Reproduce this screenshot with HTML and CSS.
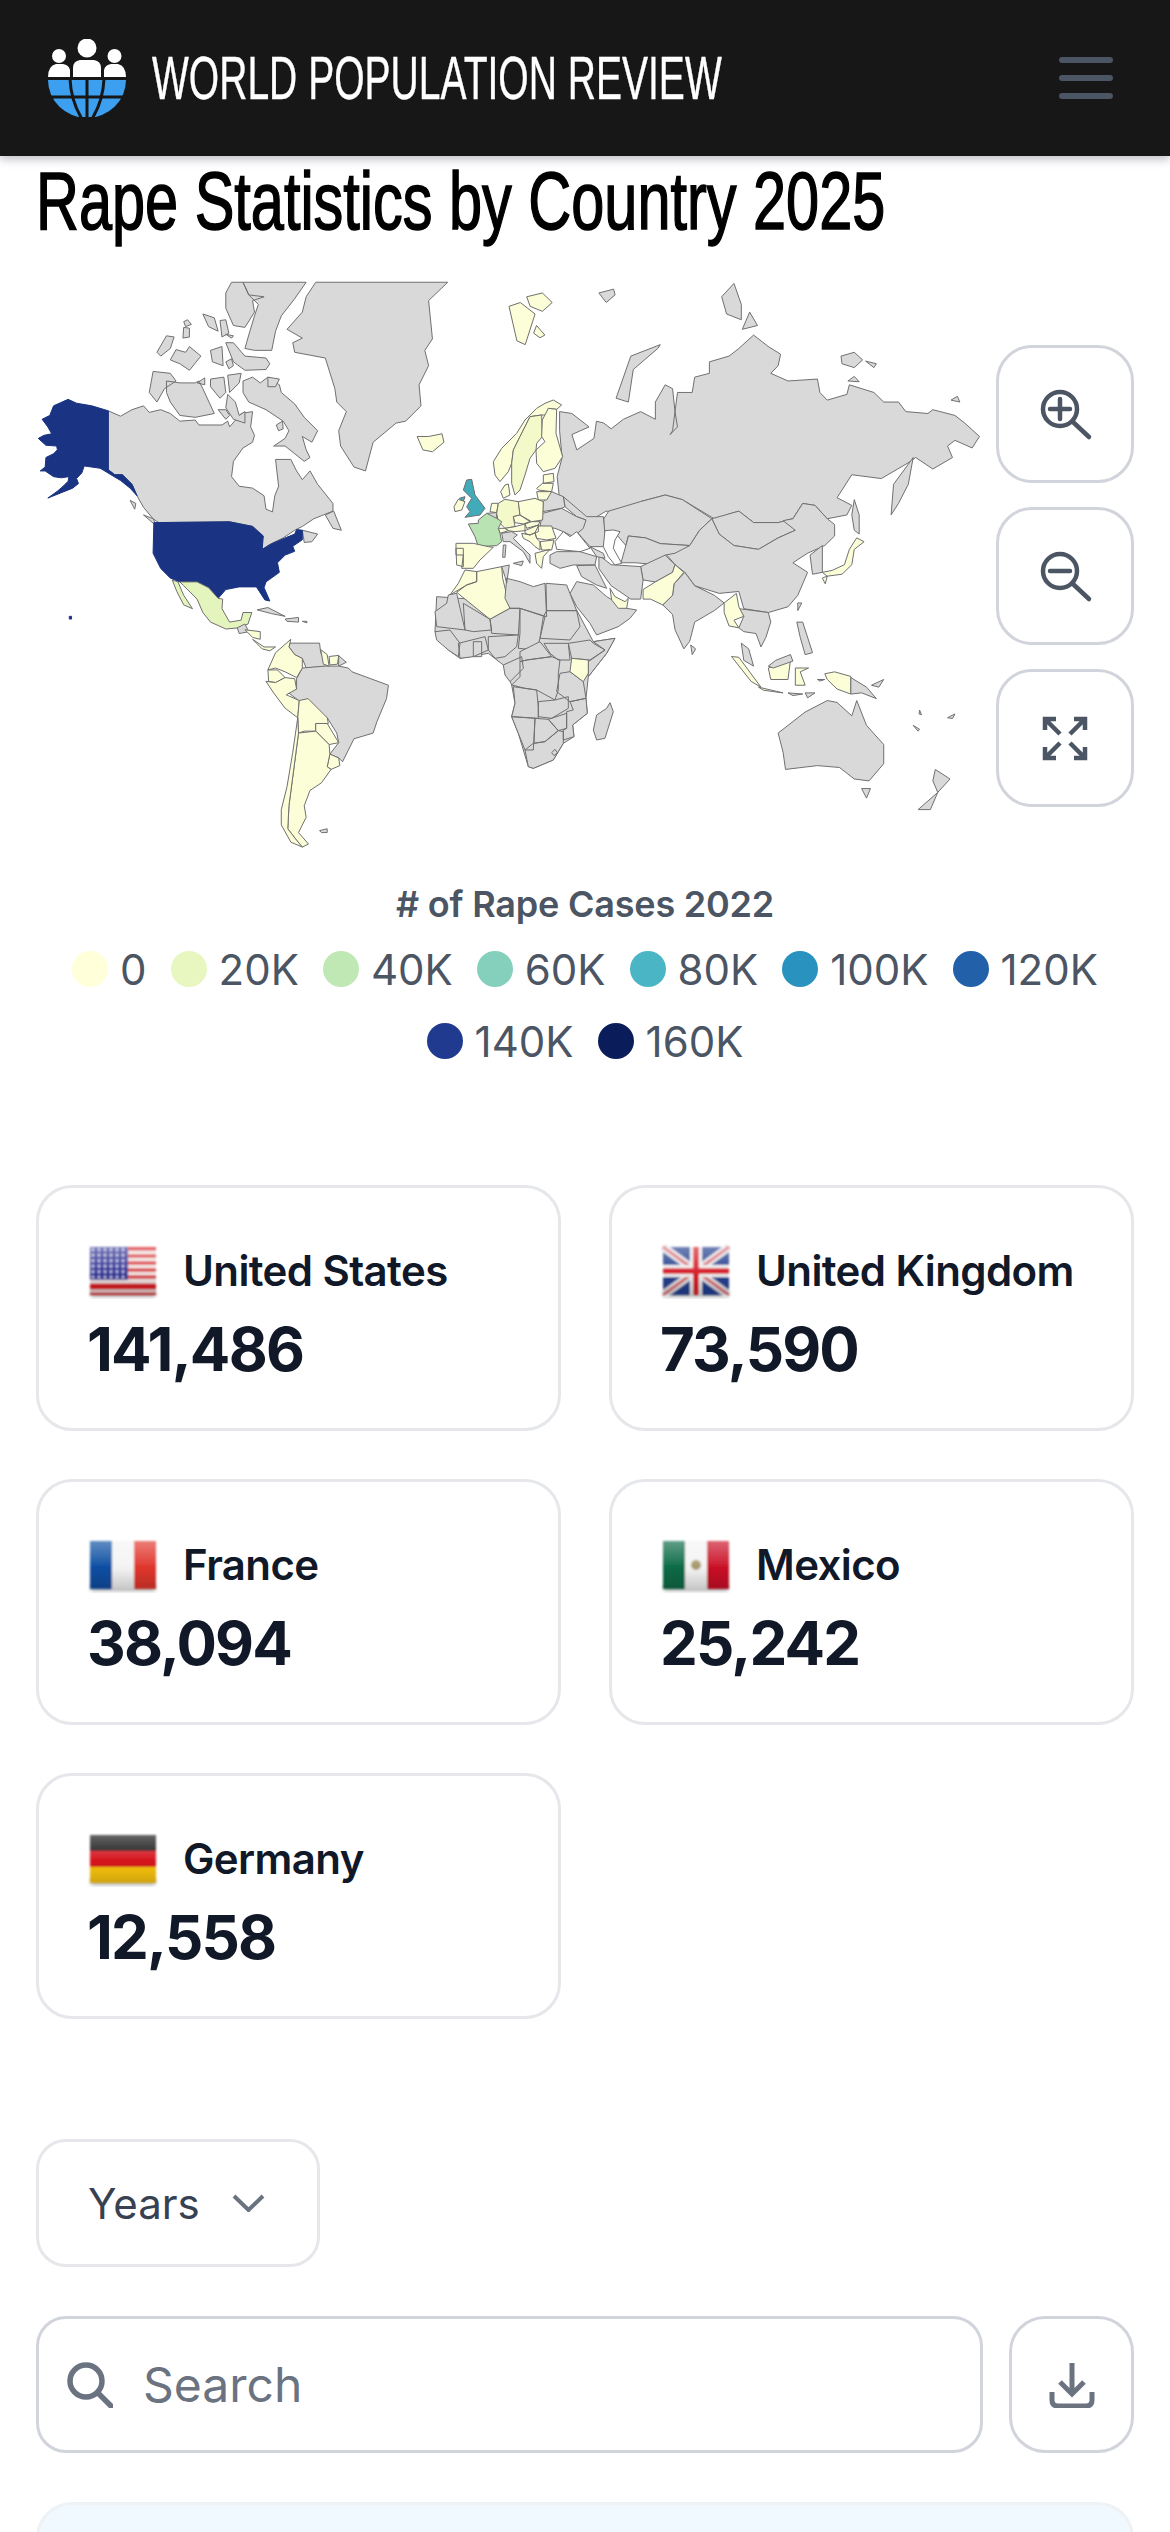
FILE: index.html
```html
<!DOCTYPE html>
<html lang="en">
<head>
<meta charset="utf-8">
<title>Rape Statistics by Country 2025</title>
<link rel="stylesheet" href="styles.css">
</head>
<body>
<header class="topbar">
  <div class="brand">
    <svg class="logo" viewBox="48 39 78 78" aria-hidden="true">
      <circle cx="87" cy="48" r="9.5" fill="#fff"/>
      <circle cx="59" cy="56" r="7" fill="#fff"/>
      <circle cx="114.500" cy="56" r="7" fill="#fff"/>
      <path d="M73 77v-9q0-7 7-8h14q7 1 7 8v9z" fill="#fff"/>
      <path d="M48 77q0-11 8-13h7q6 1 7 6v7z" fill="#fff"/>
      <path d="M126 77q0-11-8-13h-7q-6 1-7 6v7z" fill="#fff"/>
      <path d="M48 80h78a39 38 0 0 1-78 0z" fill="#3d9fef"/>
      <path d="M48 97h78M70 79q1 22 12 40M87 79v40M104 79q-1 22-12 40" stroke="#171717" stroke-width="3" fill="none"/>
    </svg>
    <span class="brand-name">WORLD POPULATION REVIEW</span>
  </div>
  <div class="burger"><span></span><span></span><span></span></div>
</header>

<main class="page">
  <h1 class="title"><span>Rape Statistics by Country 2025</span></h1>

  <section class="map-wrap">
    <svg class="map" viewBox="36 270 1098 600" aria-label="World map">
      <g transform="translate(0 270) scale(.3827)">
        <path class="g" d="M825 32H1170L1120 80 1130 180 1110 210 1120 250 1095 300 1100 355 1060 395 1035 400 975 450 955 525 925 515 890 460 885 420 905 370 880 345 875 310 850 230 770 215 765 190 790 178 750 155 790 110 800 70Z"/>
        <path class="g" d="M283 368L315 382 345 365 375 355 390 372 420 365 445 375 470 395 510 392 520 405 580 405 595 395 600 410 630 375 660 370 655 410 665 432 660 450 635 465 610 500 605 540 625 565 660 570 690 590 695 625 712 632 718 590 728 565 720 495 760 495 775 525 790 548 810 525 830 560 870 610 870 630 820 650 790 670 770 680 740 700 700 720 685 732 685 695 660 670 600 658 415 660 400 650 375 620 358 590 345 560 320 535 300 535 283 522Z"/>
        <path class="g" d="M635 290L660 280 680 295 700 280 730 300 735 320 770 350 795 385 830 420 815 450 790 435 800 470 810 490 795 500 770 480 745 460 715 460 745 440 755 420 740 395 695 365 650 345 635 320Z"/>
        <path class="g" d="M850 640L872 630 892 680 870 675ZM790 680L830 690 815 710 795 712ZM340 602L355 610 352 625ZM375 640L400 650 410 670ZM722 405L738 395 740 415 728 420Z"/>
        <path class="g" d="M400 265L445 270 460 290 430 310 410 345 390 320ZM435 290L470 295 510 295 520 290 530 310 560 375 510 385 470 380 445 345 435 320ZM410 215L435 172 455 175 445 205 420 225ZM445 235L460 208 485 215 495 200 525 225 495 262 470 245ZM480 150L495 152 495 175 478 178ZM480 135L490 130 500 142 485 148ZM530 115L560 125 570 160 545 148ZM575 132L590 130 598 165 580 175ZM590 168L610 172 605 178ZM550 210L580 200 583 250 555 240ZM590 190L610 190 640 225 695 230 705 245 695 260 640 262 610 240ZM590 240L605 232 610 250 598 258ZM550 285L585 280 590 320 575 335 550 305ZM595 275L630 270 625 295 600 320ZM595 325L615 345 625 380 640 370 640 400 610 390 590 360ZM515 295L535 282 535 300ZM570 365L590 365 600 380 590 390ZM700 280L730 285 720 305 700 305Z"/>
        <path class="g" d="M590 60L605 32 635 32 650 65 690 70 660 80 665 110 640 150 610 145 590 100ZM635 32H800L770 75 735 120 720 160 710 210 665 210 640 205 650 170 665 120 675 90 650 65Z"/>
        <path class="us" d="M283 368V522L262 518 240 515 220 512 214 530 200 545 205 558 190 570 165 580 125 596 150 578 165 565 178 552 180 540 160 543 140 540 118 525 105 525 118 515 120 490 140 480 150 470 148 460 120 458 100 440 115 432 135 428 125 410 110 390 130 380 140 355 178 338 200 348 240 355Z"/>
        <path class="us" d="M262 518L283 522 300 535 320 535 345 560 358 590 340 570 315 550 290 535Z"/>
        <path class="us" d="M402 660L600 658 660 670 688 695 685 730 710 715 745 700 770 690 775 678 790 680 790 705 765 722 770 735 745 745 725 765 730 790 695 815 690 830 705 865 692 862 670 828 625 828 590 835 570 858 545 830 515 815 470 815 445 805 420 780 400 740Z"/>
        <path class="us" d="M181 905h6v7h-6z"/>
        <path class="mx" d="M470 815L515 815 545 830 570 858 582 860 580 885 600 920 630 915 635 895 658 895 648 925 625 935 590 938 550 920 530 895 515 860 480 825Z"/>
        <path class="mx" d="M450 810L465 815 480 850 503 885 480 875 462 840Z"/>
        <path class="g" d="M620 935L640 925 650 945 625 950ZM672 888L700 882 745 905 710 898ZM745 912L780 908 780 920 750 918ZM790 918L802 918 802 922Z"/>
        <path class="l" d="M640 940L680 945 680 965 660 960ZM660 965L690 985 720 985 705 995 685 990Z"/>
        <path class="g" d="M758 975L835 975 838 1000 855 1035 800 1040 790 1015 770 1005 755 985ZM885 1008L905 1025 885 1035Z"/>
        <path class="g" d="M748 1100L775 1095 775 1068 790 1040 850 1035 885 1035 910 1040 920 1050 1015 1085 1010 1120 985 1180 975 1210 925 1225 895 1285 885 1275 862 1265 885 1235 880 1210 855 1170 805 1135 780 1125Z"/>
        <path class="l" d="M720 1000L760 965 755 985 770 1005 790 1015 790 1040 775 1065 745 1050 720 1040 700 1045Z"/>
        <path class="l" d="M838 992L855 1005 860 1035 845 1030ZM860 1010L885 1007 882 1030 862 1032Z"/>
        <path class="l" d="M700 1045L725 1045 745 1065 720 1078 702 1075Z"/>
        <path class="l" d="M695 1075L720 1078 745 1065 770 1068 775 1095 748 1110 782 1125 778 1170 745 1145 715 1105Z"/>
        <path class="l" d="M782 1125L805 1120 855 1170 858 1185 825 1185 825 1205 795 1205 780 1210 778 1170Z"/>
        <path class="l" d="M825 1185L855 1185 885 1235 860 1240 825 1205Z"/>
        <path class="l" d="M862 1265L885 1275 888 1295 865 1305 855 1298Z"/>
        <path class="l" d="M780 1210L825 1205 860 1240 862 1265 855 1298 865 1305 840 1340 810 1360 795 1400 800 1430 780 1470 806 1500 790 1508 775 1490 752 1460 755 1400Z"/>
        <path class="l" d="M778 1170L780 1210 755 1400 752 1460 775 1490 790 1508 760 1495 735 1450 735 1410 750 1350 765 1260Z"/>
        <path class="g" d="M835 1465L855 1460 855 1470 840 1470Z"/>
        <path class="l" d="M1090 435L1120 435 1155 428 1160 450 1130 475 1105 470Z"/>
      </g>

      <g transform="translate(400 270) scale(.4911 .3827)">
        <path class="l" d="M222 95L245 85 275 115 255 195 238 185ZM258 70L290 60 310 85 290 108 265 95ZM278 145L295 170 285 177 272 165Z"/>
        <path class="g" d="M320 540L330 490 325 420 325 370 350 375 385 410 350 430 360 470 395 440 400 395 415 400 430 415 455 390 490 370 520 390 520 345 540 300 555 310 560 370 565 410 550 430 555 420 565 320 595 320 600 280 630 270 630 240 670 225 690 205 720 170 750 200 775 220 770 250 755 270 790 290 850 285 855 320 870 340 910 325 915 300 965 320 985 345 1015 345 1030 370 1075 375 1085 365 1130 380 1150 400 1180 435 1165 465 1130 445 1115 460 1125 490 1085 520 1050 490 1040 500 1000 530 980 545 920 535 890 595 920 615 910 640 870 650 845 615 820 610 800 650 770 660 720 660 690 630 640 650 575 600 540 588 490 605 480 640 420 630 380 660 350 630 325 600Z"/>
        <path class="g" d="M440 335L470 225 530 195 525 205 475 260 465 345ZM655 70L680 35 695 90 695 130 665 115ZM697 155L712 110 728 145ZM898 225L925 215 942 235 925 255 900 245ZM948 238L970 245 965 255ZM912 290L925 278 935 292ZM1122 340L1135 330 1140 345ZM405 60L435 50 438 65 420 85Z"/>
        <path class="g" d="M925 600L935 640 935 690 925 680 920 640ZM1000 640L1005 560 1045 490 1035 560 1015 610Z"/>
        <path class="g" d="M415 650L425 630 490 605 540 588 575 600 635 650 610 680 590 720 530 715 500 700 465 695 460 720 440 690 415 680Z"/>
        <path class="g" d="M635 650L690 630 720 660 770 660 800 650 805 680 770 700 730 730 680 720 650 690Z"/>
        <path class="g" d="M540 740L590 720 610 680 635 650 650 690 680 720 730 730 770 700 805 680 780 655 800 650 820 610 845 615 870 650 885 665 885 695 865 720 830 740 800 765 830 790 810 850 790 880 750 895 700 885 690 840 650 845 600 825 580 790 560 770Z"/>
        <path class="g" d="M460 720L465 695 500 700 530 715 590 720 560 740 540 745 520 770 480 765 450 765Z"/>
        <path class="g" d="M490 775L540 745 560 770 555 790 520 815 495 810Z"/>
        <path class="g" d="M405 745L430 770 490 775 495 810 490 860 470 860 430 825 405 780Z"/>
        <path class="g" d="M558 820L580 790 600 825 640 850 660 870 640 890 600 920 590 970 578 990 560 940 555 900 535 875 555 850Z"/>
        <path class="l" d="M495 835L520 815 555 790 560 770 578 790 558 820 555 850 535 875 510 860 495 860Z"/>
        <path class="g" d="M690 885L750 895 755 920 745 960 735 985 725 950 700 945 690 935 700 905ZM695 975L710 990 720 1035 700 1020Z"/>
        <path class="l" d="M660 870L685 845 690 880 700 905 680 915 690 935 670 930 660 895Z"/>
        <path class="g" d="M835 745L860 720 860 790 840 795ZM592 980L602 990 595 1005ZM810 870L818 870 810 890ZM808 920L820 920 840 1000 825 1005 815 960Z"/>
        <path class="l" d="M915 730L930 700 945 710 925 730 920 770 900 795 870 800 860 790 880 785 905 770ZM860 805L870 800 866 820Z"/>
        <path class="l" d="M675 1010L690 1012 735 1090 715 1075ZM730 1090L780 1105 740 1098ZM750 1040L795 1020 790 1070 755 1070ZM805 1040L832 1040 815 1050 825 1085 805 1085ZM865 1055L885 1050 918 1062 918 1108 890 1095 870 1070Z"/>
        <path class="g" d="M750 1035L765 1020 795 1005 800 1022 760 1040ZM918 1065L950 1090 970 1120 940 1105 918 1108ZM770 1210L825 1155 870 1125 890 1130 920 1165 930 1125 950 1190 985 1240 985 1290 955 1335 925 1330 895 1300 850 1295 785 1305 780 1260ZM940 1355L958 1355 950 1380ZM1090 1305L1120 1330 1095 1365 1085 1335ZM1055 1410L1095 1365 1080 1410ZM1045 1190L1058 1200 1055 1205ZM1115 1170L1130 1160 1125 1172ZM960 1085L985 1070 975 1090ZM1058 1150L1062 1162 1057 1160ZM790 1105L820 1108 800 1112ZM850 1070L865 1070 855 1074ZM825 1105L845 1105 830 1118Z"/>
      </g>

      <g transform="translate(420 610) scale(.3333)">
        <path class="g" d="M50 -40L330 -20 375 0 470 0 520 95 585 85 560 130 505 200 498 265 502 310 458 345 462 380 430 400 400 450 340 475 325 470 295 370 275 320 285 280 275 225 250 165 205 130 120 145 85 120 45 65Z"/>
      </g>

      <g transform="translate(430 400) scale(.3333)">
        <path class="g" d="M400 290L470 350 520 350 525 400 545 395 520 440 480 440 440 395 468 360 440 350 405 320Z"/>
        <path class="g" d="M338 340L395 325 440 350 468 360 460 385 430 410 400 395 375 385 330 378ZM340 305L365 275 400 290 405 320 395 325 338 335Z"/>
        <path class="w" d="M375 425L400 395 420 410 440 395 480 445 450 455 380 448Z"/>
        <path class="g" d="M360 465L380 455 450 455 500 470 495 495 430 495 390 505 360 490ZM480 440L520 460 525 475 500 470ZM440 497L495 495 530 565 500 555 455 530Z"/>
        <path class="w" d="M525 392L550 390 570 395 555 420 550 445 575 490 555 495 535 470 520 440Z"/>
        <path class="g" d="M420 580L440 545 490 555 530 590 590 625 620 630 600 655 565 680 500 705 480 670 440 620Z"/>
        <path class="l" d="M540 565L555 590 585 605 595 595 590 625 565 625 545 600Z"/>
        <path class="l" d="M190 185L215 145 260 100 285 60 320 25 345 10 370 0 395 15 380 28 355 25 350 45 335 45 300 50 270 110 250 150 245 190 235 215 210 245 195 225Z"/>
        <path class="l2" d="M300 50L335 45 337 110 320 130 318 150 300 175 285 225 270 270 255 285 245 250 245 190 250 150 270 110Z"/>
        <path class="l" d="M355 25L380 28 378 100 398 170 375 205 340 215 320 190 318 150 345 125 335 110 337 60Z"/>
        <path class="l" d="M225 255L235 252 240 285 220 295 212 275ZM340 225L370 220 372 245 340 250ZM320 265L338 250 370 250 365 275 325 270ZM320 275L365 275 350 300 325 300ZM185 310L205 310 200 338 180 335Z"/>
        <path class="g" d="M170 340L200 338 200 355 185 355Z"/>
        <path class="l2" d="M205 310L225 298 265 305 270 345 250 350 255 380 225 385 205 365 200 340Z"/>
        <path class="l" d="M265 305L315 295 340 305 338 360 305 365 270 345ZM250 350L270 345 300 365 280 372 255 368ZM285 372L305 365 330 365 325 375 290 385ZM225 385L255 380 285 372 285 392 255 395 235 392ZM285 392L325 375 325 395 300 405 285 400ZM325 378L365 378 378 415 350 420 320 415 315 398ZM330 425L372 420 365 450 335 450ZM275 400L300 405 315 398 320 415 330 425 330 450 315 440 300 425 280 415ZM315 460L360 448 340 470 335 505 320 490ZM205 385L225 385 235 392 210 400Z"/>
        <path class="g" d="M215 400L245 395 262 405 250 415 275 440 300 465 300 490 280 455 240 425 220 425ZM220 435L228 435 225 472 218 472ZM250 490L280 483 275 497Z"/>
        <path class="fr" d="M115 372L145 370 145 360 170 340 200 355 215 365 205 385 210 400 215 425 200 437 145 440 135 410Z"/>
        <path class="uk" d="M110 240L125 238 135 285 165 325 150 345 105 352 120 335 110 320 125 295 100 270ZM88 295L105 290 100 305Z"/>
        <path class="l" d="M72 320L85 298 105 305 95 330 75 335ZM78 430L130 430 175 440 190 442 150 480 130 505 95 505 100 465 78 465ZM78 445L100 445 100 500 80 495ZM105 510L140 515 140 545 110 555 85 570 60 585 85 550ZM140 515L215 500 218 535 240 625 180 658 80 577 110 555 140 545Z"/>
        <path class="g" d="M215 500L238 495 230 550 225 530ZM230 535L270 545 310 560 345 550 350 650 270 625 240 625 225 595ZM348 550L410 555 440 632 350 632ZM350 632L440 632 450 680 420 720 330 715 340 650ZM55 585L80 580 105 690 20 680 15 635 50 610ZM100 610L180 658 185 690 130 695 105 690ZM180 658L240 625 270 625 265 705 185 700ZM270 625L345 650 330 715 320 750 265 745 270 700Z"/>
      </g>

      <g transform="translate(420 610) scale(.3333)">
        <path class="g" d="M445 100L510 90 520 100 555 120 510 150 455 145ZM520 95L585 85 560 130 505 200 505 155 555 120ZM372 100L445 100 450 150 415 150 390 130ZM300 155L320 150 395 140 420 150 415 190 415 240 405 270 350 240 315 235 275 225 300 200ZM300 125L360 95 395 140 320 150 300 155ZM250 165L305 140 310 175 270 215 255 195ZM205 80L295 75 290 110 255 140 225 145 205 120ZM45 65L90 60 120 100 115 140 85 120 50 90ZM115 100L195 80 205 120 160 140 120 145ZM160 95L185 95 185 140 160 140ZM420 190L450 185 490 215 498 265 450 275 410 245ZM280 230L315 235 350 240 355 290 355 325 275 320 285 280ZM355 275L405 270 445 260 445 295 395 325 355 320ZM275 320L345 325 340 420 315 420 295 370ZM345 325L385 328 415 362 375 395 342 400ZM385 328L440 310 440 355 415 362ZM450 275L498 265 502 310 458 345 462 380 430 390 430 360 440 355 440 305 460 300ZM315 420L340 400 375 395 415 362 430 365 430 400 400 450 340 475 325 470ZM395 428L405 418 412 428 402 437ZM570 278L580 305 555 385 530 390 520 360 530 315 560 295Z"/>
        <path class="l" d="M455 145L505 150 505 190 490 215 450 185Z"/>
      </g>
    </svg>
    <div class="map-tools">
      <button class="tool" type="button" aria-label="Zoom in">
        <svg class="tool-icon" viewBox="0 0 66 66"><circle cx="28" cy="28" r="17"/><path d="M41 41l16 15M28 18v20M18 28h20"/></svg>
      </button>
      <button class="tool" type="button" aria-label="Zoom out">
        <svg class="tool-icon" viewBox="0 0 66 66"><circle cx="28" cy="28" r="17"/><path d="M41 41l16 15M18 28h20"/></svg>
      </button>
      <button class="tool" type="button" aria-label="Fullscreen">
        <svg class="tool-icon expand" viewBox="0 0 66 66"><path d="M13 25V14h11M14 15l14 14M53 25V14H42M52 15L38 29M13 42v11h11M14 52l14-14M53 42v11H42M52 52L38 38"/></svg>
      </button>
    </div>
  </section>

  <section class="legend">
    <div class="legend-title"># of Rape Cases 2022</div>
    <div class="legend-items">
      <div class="legend-item"><span class="dot c0"></span>0</div>
      <div class="legend-item"><span class="dot c1"></span>20K</div>
      <div class="legend-item"><span class="dot c2"></span>40K</div>
      <div class="legend-item"><span class="dot c3"></span>60K</div>
      <div class="legend-item"><span class="dot c4"></span>80K</div>
      <div class="legend-item"><span class="dot c5"></span>100K</div>
      <div class="legend-item"><span class="dot c6"></span>120K</div>
      <div class="legend-item"><span class="dot c7"></span>140K</div>
      <div class="legend-item"><span class="dot c8"></span>160K</div>
    </div>
  </section>

  <section class="cards">
    <article class="card">
      <div class="card-head">
        <svg class="flag" viewBox="0 0 66 56" aria-hidden="true">
          <defs>
            <linearGradient id="gloss" x1="0" y1="0" x2="0" y2="1">
              <stop offset="0" stop-color="#fff" stop-opacity=".35"/>
              <stop offset=".5" stop-color="#fff" stop-opacity=".05"/>
              <stop offset=".55" stop-color="#000" stop-opacity="0"/>
              <stop offset="1" stop-color="#000" stop-opacity=".18"/>
            </linearGradient>
            <filter id="soft" x="-5%" y="-5%" width="110%" height="120%"><feGaussianBlur stdDeviation=".9"/></filter>
            <filter id="shade" x="-10%" y="-20%" width="120%" height="150%"><feGaussianBlur stdDeviation="2"/></filter>
            <pattern id="stars" width="6" height="5.500" patternUnits="userSpaceOnUse"><circle cx="3" cy="2.700" r="1.500" fill="#d9dcf5"/></pattern>
          </defs>
          <rect class="flag-shadow" x="1" y="44" width="64" height="6" filter="url(#shade)"/>
          <g filter="url(#soft)">
            <rect width="66" height="48" fill="#f0e6e4"/>
            <path d="M0 0h66v3.500H0zM0 7.500h66v3H0zM0 14.500h66v3H0zM0 21.500h66v3H0zM0 28.500h66v3H0zM0 36.500h66v6H0zM0 45.500h66V48H0z" fill="#d8171f"/>
            <rect width="38" height="33" fill="#2b2d91"/>
            <rect width="38" height="33" fill="url(#stars)"/>
            <rect width="66" height="48" fill="url(#gloss)"/>
          </g>
        </svg>
        <span class="name">United States</span>
      </div>
      <div class="value">141,486</div>
    </article>
    <article class="card">
      <div class="card-head">
        <svg class="flag" viewBox="0 0 66 56" aria-hidden="true">
          <rect class="flag-shadow" x="1" y="44" width="64" height="6" filter="url(#shade)"/>
          <g filter="url(#soft)">
            <rect width="66" height="48" fill="#23408f"/>
            <path d="M0 0L66 48M66 0L0 48" stroke="#eee" stroke-width="8"/>
            <path d="M0 0L66 48M66 0L0 48" stroke="#d6606a" stroke-width="3"/>
            <path d="M33 0V48M0 24H66" stroke="#f2f2f2" stroke-width="12"/>
            <path d="M33 0V48M0 24H66" stroke="#d7202c" stroke-width="6"/>
            <rect width="66" height="48" fill="url(#gloss)"/>
          </g>
        </svg>
        <span class="name">United Kingdom</span>
      </div>
      <div class="value">73,590</div>
    </article>
    <article class="card">
      <div class="card-head">
        <svg class="flag" viewBox="0 0 66 56" aria-hidden="true">
          <rect class="flag-shadow" x="1" y="44" width="64" height="6" filter="url(#shade)"/>
          <g filter="url(#soft)">
            <rect width="22" height="48" fill="#0b4ea2"/>
            <rect x="22" width="22" height="48" fill="#f4f4f4"/>
            <rect x="44" width="22" height="48" fill="#e0362c"/>
            <rect width="66" height="48" fill="url(#gloss)"/>
          </g>
        </svg>
        <span class="name">France</span>
      </div>
      <div class="value">38,094</div>
    </article>
    <article class="card">
      <div class="card-head">
        <svg class="flag" viewBox="0 0 66 56" aria-hidden="true">
          <rect class="flag-shadow" x="1" y="44" width="64" height="6" filter="url(#shade)"/>
          <g filter="url(#soft)">
            <rect width="22" height="48" fill="#0a6a46"/>
            <rect x="22" width="22" height="48" fill="#f4f4f4"/>
            <rect x="44" width="22" height="48" fill="#ca1126"/>
            <circle cx="33" cy="24" r="5" fill="#a89a6c"/>
            <rect width="66" height="48" fill="url(#gloss)"/>
          </g>
        </svg>
        <span class="name">Mexico</span>
      </div>
      <div class="value">25,242</div>
    </article>
    <article class="card">
      <div class="card-head">
        <svg class="flag" viewBox="0 0 66 56" aria-hidden="true">
          <rect class="flag-shadow" x="1" y="44" width="64" height="6" filter="url(#shade)"/>
          <g filter="url(#soft)">
            <rect width="66" height="16" fill="#111"/>
            <rect y="16" width="66" height="16" fill="#d5121c"/>
            <rect y="32" width="66" height="16" fill="#fdc70a"/>
            <rect width="66" height="48" fill="url(#gloss)"/>
          </g>
        </svg>
        <span class="name">Germany</span>
      </div>
      <div class="value">12,558</div>
    </article>
  </section>

  <section class="controls">
    <button class="years" type="button">
      <span>Years</span>
      <svg class="chev" viewBox="0 0 33 18"><path d="M2 2l14.500 14L31 2"/></svg>
    </button>
    <div class="search-row">
      <div class="search">
        <svg class="search-icon" viewBox="0 0 46 46"><circle cx="19" cy="19" r="16"/><path d="M31 31l13 13"/></svg>
        <span class="placeholder">Search</span>
      </div>
      <button class="download" type="button" aria-label="Download">
        <svg class="dl-icon" viewBox="0 0 46 47"><path d="M23 2v31M11 21l12 12 12-12M3 31v8q0 6 6 6h28q6 0 6-6v-8"/></svg>
      </button>
    </div>
    <div class="info-box"></div>
  </section>
</main>
</body>
</html>
```

FILE: styles.css
```css
* { box-sizing: border-box; }
html, body { height: 2532px; overflow: hidden; }
body { margin: 0; background: #fff; font-family: Inter, "Liberation Sans", sans-serif; color: #111827; }

.topbar {
  height: 156px;
  background: #171717;
  display: flex;
  align-items: center;
  justify-content: space-between;
  padding: 0 57px 0 48px;
  box-shadow: 0 3px 9px rgba(60, 60, 90, .35);
  position: relative;
}
.brand { display: flex; align-items: center; gap: 26px; }
.logo { width: 78px; height: 78px; display: block; }
.brand-name {
  display: block;
  width: 568px;
  font-family: "Liberation Sans", sans-serif;
  font-size: 61px;
  line-height: 64px;
  color: #fff;
  white-space: nowrap;
  -webkit-text-stroke: .4px #fff;
  transform: scaleX(.64);
  transform-origin: left center;
}
.burger { display: flex; flex-direction: column; gap: 12px; width: 54px; }
.burger span { height: 6px; border-radius: 3px; background: #4b5563; }

.page { padding: 0 36px; }
.title { margin: 0; height: 114px; font-family: "Liberation Sans", sans-serif; font-weight: 400; font-size: 81px; line-height: 90px; color: #000; white-space: nowrap; -webkit-text-stroke: 1.5px #000; }
.title span { display: block; transform: scaleX(.734); transform-origin: left center; }

.map-wrap { position: relative; height: 600px; }
.map { display: block; width: 1098px; height: 600px; }
.map path { stroke: #707070; stroke-width: 1; stroke-linejoin: round; vector-effect: non-scaling-stroke; }
.map .g { fill: #d9d9d9; }
.map .w { fill: #fff; }
.map .l { fill: #fbfed6; }
.map .l2 { fill: #f3f9c9; }
.map .mx { fill: #e3f4bc; }
.map .fr { fill: #b9e3b2; }
.map .uk { fill: #41abb9; }
.map .us { fill: #1a3483; stroke: #1a3483; }

.map-tools { position: absolute; top: 75px; right: 0; display: flex; flex-direction: column; gap: 24px; }
.tool { width: 138px; height: 138px; padding: 0; background: #fff; border: 3px solid #d1d5db; border-radius: 36px; display: flex; align-items: center; justify-content: center; }
.tool-icon { width: 66px; height: 66px; display: block; fill: none; stroke: #4b5563; stroke-width: 4.5; stroke-linecap: round; }
.tool-icon.expand { stroke-linecap: butt; }

.legend { padding-top: 10px; text-align: center; }
.legend-title { font-size: 36px; line-height: 48px; font-weight: 600; letter-spacing: -.2px; color: #4b5563; }
.legend-items { margin-top: 17px; display: flex; flex-wrap: wrap; justify-content: center; gap: 24px; }
.legend-item { display: flex; align-items: center; gap: 12px; height: 48px; font-size: 42px; color: #4b5563; }
.dot { width: 36px; height: 36px; border-radius: 50%; }
.c0 { background: #ffffd9; }
.c1 { background: #e8f6bf; }
.c2 { background: #c0e8b5; }
.c3 { background: #85d0bc; }
.c4 { background: #4ab5c4; }
.c5 { background: #2a92bf; }
.c6 { background: #2260a9; }
.c7 { background: #1f3a8e; }
.c8 { background: #0b1c5a; }

.cards { margin-top: 120px; display: grid; grid-template-columns: minmax(0, 1fr) minmax(0, 1fr); gap: 48px; }
.card { height: 246px; padding: 48px; border: 3px solid #e5e7eb; border-radius: 36px; background: #fff; }
.card-head { height: 70px; display: flex; align-items: center; gap: 27px; }
.flag { flex: none; width: 66px; height: 56px; margin: 8px 0 0 3px; display: block; overflow: visible; }
.flag-shadow { fill: rgba(0, 0, 0, .3); }
.name { font-size: 42px; line-height: 60px; font-weight: 600; letter-spacing: -.6px; color: #111827; white-space: nowrap; }
.value { margin-top: 13px; font-size: 60px; line-height: 61px; font-weight: 700; letter-spacing: -1.8px; color: #111827; }

.controls { margin-top: 120px; }
.years { display: flex; align-items: center; gap: 32px; width: 284px; height: 128px; padding: 0 0 0 49px; background: #fff; border: 3px solid #e5e7eb; border-radius: 30px; font-family: inherit; font-size: 42px; color: #374151; }
.chev { width: 33px; height: 18px; fill: none; stroke: #6b7280; stroke-width: 4; }
.search-row { margin-top: 49px; display: flex; gap: 26px; }
.search { flex: 1; height: 137px; display: flex; align-items: center; gap: 30px; padding: 0 0 0 28px; border: 3px solid #d1d5db; border-radius: 30px; background: #fff; }
.search-icon { width: 46px; height: 46px; fill: none; stroke: #6b7280; stroke-width: 5.5; stroke-linecap: round; }
.placeholder { font-size: 48px; color: #6b7280; }
.download { width: 125px; height: 137px; padding: 0; display: flex; align-items: center; justify-content: center; background: #fff; border: 3px solid #d1d5db; border-radius: 36px; }
.dl-icon { width: 46px; height: 47px; fill: none; stroke: #6b7280; stroke-width: 5; }
.info-box { margin-top: 49px; height: 160px; background: #f0f9ff; border: 3px solid #eef2f5; border-radius: 36px; }
```
